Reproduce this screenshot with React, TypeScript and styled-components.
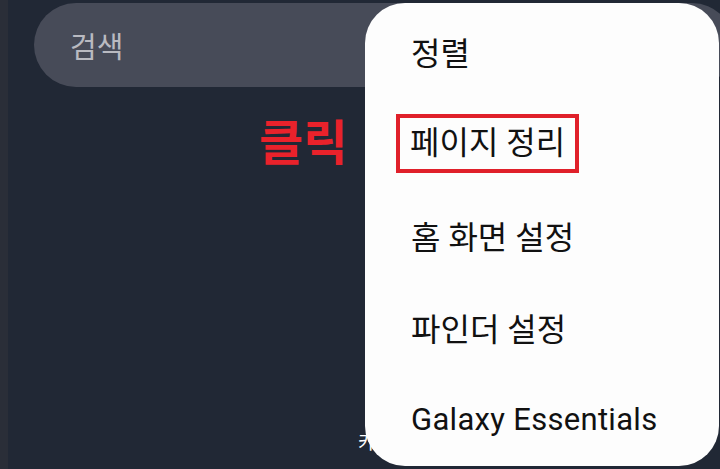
import React from 'react';
import styled, { createGlobalStyle } from 'styled-components';

const GlobalStyle = createGlobalStyle`
  html, body {
    margin: 0;
    padding: 0;
    background: #212835;
  }
  body {
    font-family: Roboto, "Noto Sans CJK KR", "Noto Sans", sans-serif;
  }
`;

const menuItems = ['정렬', '페이지 정리', '홈 화면 설정', '파인더 설정', 'Galaxy Essentials'];

export default function App() {
  return (
    <>
      <GlobalStyle />
      <Screen>
        <SearchBar>검색</SearchBar>
        <Annotation>클릭</Annotation>
        <HiddenLabel>카</HiddenLabel>
        <Menu>
          {menuItems.map((item, i) => (
            <MenuItem key={item} latin={/^[A-Za-z]/.test(item)}>
              {i === 1 ? <Highlight>{item}</Highlight> : item}
            </MenuItem>
          ))}
        </Menu>
      </Screen>
    </>
  );
}

const Screen = styled.div`
  position: relative;
  width: 720px;
  height: 469px;
  overflow: hidden;
  padding-top: 3px;
  box-sizing: border-box;
  background: linear-gradient(to right, #2a2e38 8px, #212835 8px);
`;

const SearchBar = styled.div`
  display: flex;
  align-items: center;
  width: 700px;
  height: 84px;
  margin-left: 34px;
  padding-left: 36px;
  box-sizing: border-box;
  border-radius: 42px;
  background: #474b58;
  color: #b9bac1;
  font-size: 29px;
`;

const Annotation = styled.div`
  position: absolute;
  left: 259px;
  top: 111px;
  color: #e9222b;
  font-size: 48px;
  font-weight: 700;
  font-family: "Noto Sans CJK KR", sans-serif;
  line-height: 1.2;
`;

const HiddenLabel = styled.div`
  position: absolute;
  left: 358px;
  top: 428px;
  color: #ffffff;
  font-size: 18px;
`;

const Menu = styled.div`
  position: absolute;
  left: 365px;
  top: 3px;
  width: 354px;
  height: 463px;
  padding-top: 2px;
  box-sizing: border-box;
  border-radius: 40px;
  background: #fdfdfd;
  display: flex;
  flex-direction: column;
`;

const MenuItem = styled.div<{ latin?: boolean }>`
  display: flex;
  align-items: center;
  height: 92px;
  padding-left: 46px;
  color: #111111;
  font-size: ${p => (p.latin ? '31px' : '32px')};
  letter-spacing: ${p => (p.latin ? '0.3px' : '0')};
  white-space: nowrap;
`;

const Highlight = styled.span`
  display: inline-block;
  margin-left: -15px;
  padding: 0 10px;
  line-height: 51px;
  border: 4px solid #e0202a;
`;
